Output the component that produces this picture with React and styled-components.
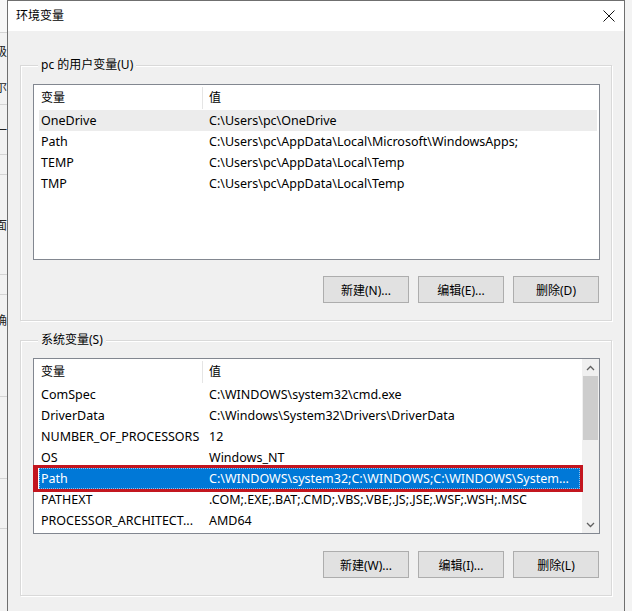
import React from 'react';
import styled, { createGlobalStyle, css } from 'styled-components';

const FONT = `"Noto Sans", "Noto Sans CJK SC", sans-serif`;

const GlobalStyle = createGlobalStyle`
  html, body { margin: 0; padding: 0; background: #f0f0f0; }
  body { font-family: ${FONT}; font-size: 12px; color: #000; }
  * { box-sizing: border-box; }
`;

const Screen = styled.div`
  display: flex;
  width: 632px;
  height: 611px;
  overflow: hidden;
  background: #f0f0f0;
`;

const BackStrip = styled.div`
  flex: none;
  width: 7px;
  display: flex;
  flex-direction: column;
  background: #f2f2f2;
  overflow: hidden;
`;

const BackRow = styled.div`
  flex: none;
  height: ${(p) => p.$h}px;
  display: flex;
  align-items: center;
  white-space: nowrap;
  font-size: 12px;
  color: #222;
  text-indent: -5px;
  border-bottom: ${(p) => (p.$line ? '1px solid #d4d4d4' : 'none')};
  background: ${(p) => p.$bg || 'transparent'};
`;

const Dialog = styled.div`
  flex: none;
  width: 618px;
  height: 611px;
  display: flex;
  flex-direction: column;
  background: #f0f0f0;
  border: 1px solid #6f6f6f;
  border-bottom: none;
`;

const TitleBar = styled.div`
  flex: none;
  height: 30px;
  display: flex;
  align-items: center;
  justify-content: space-between;
  background: #fff;
  padding-left: 8px;
`;

const Title = styled.span`
  font-size: 12px;
  color: #000;
  line-height: 16px;
`;

const CloseBox = styled.span`
  width: 30px;
  height: 30px;
  display: flex;
  align-items: center;
  justify-content: center;
`;

const Body = styled.div`
  flex: 1;
  display: flex;
  flex-direction: column;
  padding: 0 12px;
`;

const Group = styled.div`
  margin-top: ${(p) => p.$mt}px;
  border: 1px solid #d9d9d9;
  box-shadow: inset 1px 1px 0 #fff, 1px 1px 0 #fff;
  padding: 0 11px 17px 12px;
  display: flex;
  flex-direction: column;
`;

const GroupTitle = styled.div`
  margin: -9px 0 0 5px;
  padding: 0 3px;
  width: fit-content;
  height: 16px;
  line-height: 16px;
  background: #f0f0f0;
  font-size: 12px;
`;

const ListBox = styled.div`
  margin-top: ${(p) => p.$mt}px;
  height: 176px;
  border: 1px solid #828790;
  background: #fff;
  display: flex;
`;

const ListMain = styled.div`
  flex: 1;
  min-width: 0;
  padding: 0 2px 0 5px;
  display: flex;
  flex-direction: column;
`;

const cols = css`
  display: grid;
  grid-template-columns: 164px minmax(0, 1fr);
  align-items: center;
`;

const Header = styled.div`
  ${cols};
  flex: none;
  height: 25px;
`;

const HeaderCell = styled.div`
  height: 22px;
  line-height: 21px;
  padding-left: ${(p) => (p.$first ? 2 : 6)}px;
  border-right: ${(p) => (p.$first ? '1px solid #e5e5e5' : 'none')};
`;

const Row = styled.div`
  ${cols};
  flex: none;
  position: relative;
  height: 21px;
  background: ${(p) => (p.$state === 'selected' ? '#0078d7' : p.$state === 'hover' ? '#ececec' : 'transparent')};
  color: ${(p) => (p.$state === 'selected' ? '#fff' : '#000')};
  outline: ${(p) => (p.$state === 'selected' ? '1px dotted rgba(255,255,255,0.55)' : 'none')};
  outline-offset: -1px;
  ${(p) =>
    p.$marked &&
    css`
      &::after {
        content: '';
        position: absolute;
        left: -6px;
        right: -3px;
        top: -3px;
        bottom: -3px;
        border: 3px solid #c3161f;
        border-left-width: 5px;
        pointer-events: none;
      }
    `}
`;

const Cell = styled.div`
  padding-left: ${(p) => (p.$first ? 2 : 6)}px;
  white-space: nowrap;
  overflow: hidden;
  font-size: 12.5px;
  line-height: 20px;
`;

const ScrollBar = styled.div`
  flex: none;
  width: 17px;
  background: #f0f0f0;
  display: flex;
  flex-direction: column;
`;

const ScrollArrow = styled.div`
  flex: none;
  height: 17px;
  display: flex;
  align-items: center;
  justify-content: center;
`;

const ScrollTrack = styled.div`
  flex: 1;
  display: flex;
  flex-direction: column;
  padding: 0 1px;
`;

const ScrollThumb = styled.div`
  height: 64px;
  background: #cdcdcd;
`;

const ButtonRow = styled.div`
  margin-top: ${(p) => p.$mt}px;
  display: flex;
  justify-content: flex-end;
  gap: 9px;
  padding-right: 1px;
`;

const Button = styled.button`
  width: 86px;
  height: 27px;
  padding: 0;
  background: #e1e1e1;
  border: 1px solid #adadad;
  font-family: ${FONT};
  font-size: 12px;
  color: #000;
`;

const RightStrip = styled.div`
  flex: 1;
  background: #f3f3f3;
`;

const Chevron = ({ up }) => (
  <svg width="9" height="6" viewBox="0 0 9 6">
    <polyline
      points={up ? '1,5 4.5,1.5 8,5' : '1,1 4.5,4.5 8,1'}
      fill="none"
      stroke="#606060"
      strokeWidth="1.3"
    />
  </svg>
);

const CloseIcon = () => (
  <svg width="12" height="12" viewBox="0 0 12 12">
    <path d="M0.5 0.5 L11.5 11.5 M11.5 0.5 L0.5 11.5" stroke="#111" strokeWidth="1" fill="none" />
  </svg>
);

const userVars = [
  ['OneDrive', 'C:\\Users\\pc\\OneDrive', 'hover'],
  ['Path', 'C:\\Users\\pc\\AppData\\Local\\Microsoft\\WindowsApps;'],
  ['TEMP', 'C:\\Users\\pc\\AppData\\Local\\Temp'],
  ['TMP', 'C:\\Users\\pc\\AppData\\Local\\Temp'],
];

const sysVars = [
  ['ComSpec', 'C:\\WINDOWS\\system32\\cmd.exe'],
  ['DriverData', 'C:\\Windows\\System32\\Drivers\\DriverData'],
  ['NUMBER_OF_PROCESSORS', '12'],
  ['OS', 'Windows_NT'],
  ['Path', 'C:\\WINDOWS\\system32;C:\\WINDOWS;C:\\WINDOWS\\System...', 'selected', true],
  ['PATHEXT', '.COM;.EXE;.BAT;.CMD;.VBS;.VBE;.JS;.JSE;.WSF;.WSH;.MSC'],
  ['PROCESSOR_ARCHITECT...', 'AMD64'],
];

const backRows = [
  { h: 33, line: true, bg: '#f7f7f7' },
  { h: 36, t: '级' },
  { h: 36, t: '尔', line: true },
  { h: 50, t: '一步', line: true },
  { h: 20, line: true },
  { h: 100, t: '面', line: true },
  { h: 20, line: true },
  { h: 50, t: '确' },
  { h: 52, line: true },
  { h: 82, line: true },
  { h: 50, line: true },
];

const VarList = ({ mt, rows, scroll }) => (
  <ListBox $mt={mt}>
    <ListMain>
      <Header>
        <HeaderCell $first>变量</HeaderCell>
        <HeaderCell>值</HeaderCell>
      </Header>
      {rows.map(([name, value, state, marked]) => (
        <Row key={name + value} $state={state} $marked={marked}>
          <Cell $first>{name}</Cell>
          <Cell>{value}</Cell>
        </Row>
      ))}
    </ListMain>
    {scroll && (
      <ScrollBar>
        <ScrollArrow>
          <Chevron up />
        </ScrollArrow>
        <ScrollTrack>
          <ScrollThumb />
        </ScrollTrack>
        <ScrollArrow>
          <Chevron />
        </ScrollArrow>
      </ScrollBar>
    )}
  </ListBox>
);

export default function App() {
  return (
    <>
      <GlobalStyle />
      <Screen>
        <BackStrip>
          {backRows.map((r, i) => (
            <BackRow key={i} $h={r.h} $line={r.line} $bg={r.bg}>
              {r.t}
            </BackRow>
          ))}
        </BackStrip>
        <Dialog>
          <TitleBar>
            <Title>环境变量</Title>
            <CloseBox>
              <CloseIcon />
            </CloseBox>
          </TitleBar>
          <Body>
            <Group $mt={34}>
              <GroupTitle>pc 的用户变量(U)</GroupTitle>
              <VarList mt={11} rows={userVars} />
              <ButtonRow $mt={16}>
                <Button>新建(N)...</Button>
                <Button>编辑(E)...</Button>
                <Button>删除(D)</Button>
              </ButtonRow>
            </Group>
            <Group $mt={19}>
              <GroupTitle>系统变量(S)</GroupTitle>
              <VarList mt={10} rows={sysVars} scroll />
              <ButtonRow $mt={17}>
                <Button>新建(W)...</Button>
                <Button>编辑(I)...</Button>
                <Button>删除(L)</Button>
              </ButtonRow>
            </Group>
          </Body>
        </Dialog>
        <RightStrip />
      </Screen>
    </>
  );
}
